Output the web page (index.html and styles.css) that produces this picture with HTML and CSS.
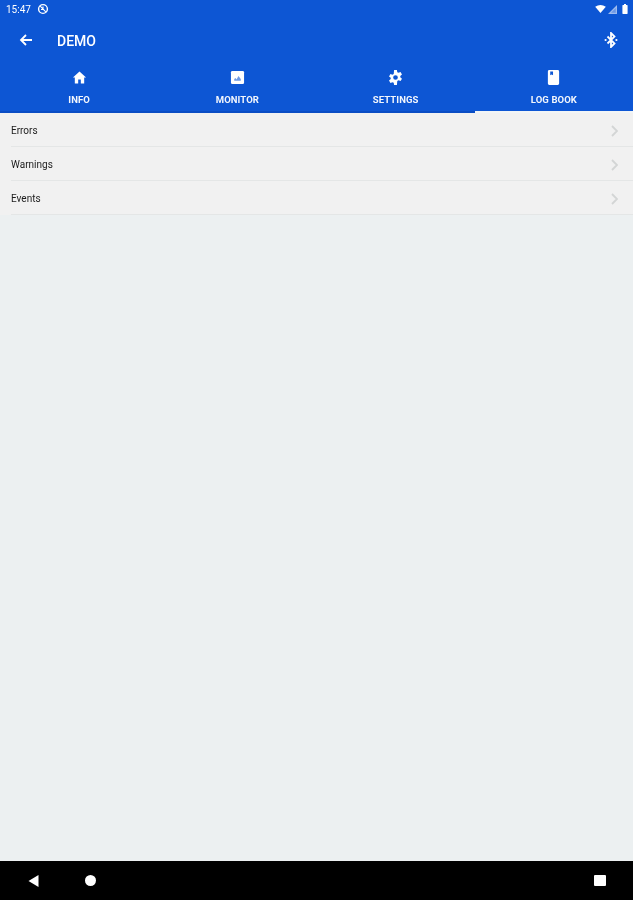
FILE: index.html
```html
<!DOCTYPE html>
<html lang="en">
<head>
<meta charset="utf-8">
<title>DEMO</title>
<link rel="stylesheet" href="styles.css">
</head>
<body>
<div class="app">
  <header class="header">
    <div class="status">
      <div class="status-left">
        <span class="clock">15:47</span>
        <svg class="status-badge" viewBox="0 0 12 12"><circle cx="6" cy="6" r="4.400" fill="none" stroke="#fff" stroke-width="1.400"/><path d="M3.200 3.200l5.600 5.600M4 6.500h3M6 3.500v3" stroke="#fff" stroke-width="1.100" fill="none"/></svg>
      </div>
      <div class="status-right">
        <svg class="wifi" viewBox="0 0 12 9"><path d="M0 2Q6-2 12 2L6 9z" fill="#fff"/></svg>
        <svg class="signal" viewBox="0 0 9 9"><path d="M9 0v9H0z" fill="#fff" fill-opacity=".6"/><path d="M7.800 3v4.800H3z" fill="#0d56d4" fill-opacity=".35"/></svg>
        <svg class="battery" viewBox="0 0 6 10"><path d="M1 1h1V0h2v1h1a.6.6 0 0 1 .6.6v8a.6.6 0 0 1-.6.4H1a.6.6 0 0 1-.6-.4v-8A.6.6 0 0 1 1 1z" fill="#fff"/></svg>
      </div>
    </div>
    <div class="toolbar">
      <svg class="back" viewBox="0 0 14 14"><path d="M13 7H2.500M7 2 2 7l5 5" fill="none" stroke="#fff" stroke-width="1.800"/></svg>
      <span class="title">DEMO</span>
      <svg class="bt" viewBox="0 0 14 16"><path d="M3.500 4.500l7 7L7 15V1l3.500 3.500-7 7" fill="none" stroke="#fff" stroke-width="1.800"/><circle cx="1.600" cy="8" r="1.100" fill="#fff"/><circle cx="12.400" cy="8" r="1.100" fill="#fff"/></svg>
    </div>
    <nav class="tabs">
      <div class="tab">
        <svg class="tab-icon" viewBox="0 0 16 16"><path d="M8 1.500 1 8h2v6.500h3.600V10h2.800v4.500H13V8h2z" fill="#fff"/></svg>
        <span class="tab-label">INFO</span>
      </div>
      <div class="tab">
        <svg class="tab-icon" viewBox="0 0 16 16"><rect x="1" y="1" width="14" height="14" rx="1.500" fill="#fff"/><path d="M4.500 11.500V9.500L6 8.500l1 1.500L9 6.500l2.500 3v2z" fill="#0d56d4" fill-opacity=".6"/></svg>
        <span class="tab-label">MONITOR</span>
      </div>
      <div class="tab">
        <svg class="tab-icon" viewBox="0 0 16 16"><path fill-rule="evenodd" d="M6.500 0h3l.4 2.300 1.300.7 2.200-.8 1.500 2.600-1.800 1.500v1.400l1.800 1.500-1.500 2.600-2.200-.8-1.300.7L9.500 16h-3l-.4-2.300-1.300-.7-2.200.8-1.500-2.600 1.800-1.500V8.300L1.100 6.800l1.500-2.600 2.200.8 1.300-.7zM8 5.500a2.500 2.500 0 1 0 0 5 2.500 2.500 0 0 0 0-5z" fill="#fff"/></svg>
        <span class="tab-label">SETTINGS</span>
      </div>
      <div class="tab tab-active">
        <svg class="tab-icon" viewBox="0 0 16 16"><path fill-rule="evenodd" d="M3.500 0h9A1.500 1.500 0 0 1 14 1.500v13a1.500 1.500 0 0 1-1.500 1.500h-9A1.500 1.500 0 0 1 2 14.500v-13A1.500 1.500 0 0 1 3.500 0zM4.500 1.500v4l1.500-.8 1.500.8v-4z" fill="#fff"/></svg>
        <span class="tab-label">LOG BOOK</span>
      </div>
    </nav>
  </header>
  <main class="content">
    <ul class="list">
      <li class="row"><div class="row-inner"><span class="row-text">Errors</span><svg class="chevron" viewBox="0 0 7 12"><path d="M1 1l5 5-5 5" fill="none" stroke="#d3d5d5" stroke-width="1.800"/></svg></div></li>
      <li class="row"><div class="row-inner"><span class="row-text">Warnings</span><svg class="chevron" viewBox="0 0 7 12"><path d="M1 1l5 5-5 5" fill="none" stroke="#d3d5d5" stroke-width="1.800"/></svg></div></li>
      <li class="row"><div class="row-inner"><span class="row-text">Events</span><svg class="chevron" viewBox="0 0 7 12"><path d="M1 1l5 5-5 5" fill="none" stroke="#d3d5d5" stroke-width="1.800"/></svg></div></li>
    </ul>
  </main>
  <footer class="navbar">
    <svg class="nav-back" viewBox="0 0 10 12"><path d="M10 0v12L0 6z" fill="#fff"/></svg>
    <span class="nav-home"></span>
    <span class="nav-recent"></span>
  </footer>
</div>
</body>
</html>
```
FILE: styles.css
```css
* { box-sizing: border-box; }
html, body { margin: 0; height: 100%; }
body { font-family: Roboto, "Liberation Sans", sans-serif; background: #ecf0f1; }
.app { display: flex; flex-direction: column; height: 900px; width: 633px; overflow: hidden; filter: blur(0.45px); }
.header { background: #0d56d4; color: #fff; height: 113px; flex: none; display: flex; flex-direction: column; }
.status { height: 18px; display: flex; justify-content: space-between; align-items: center; padding: 0 5px 0 6px; }
.status-left { display: flex; align-items: center; gap: 6px; }
.clock { font-size: 10px; }
.status-badge { width: 12px; height: 12px; }
.status-right { display: flex; align-items: center; gap: 2px; }
.wifi { width: 11px; height: 8px; }
.signal { width: 9px; height: 9px; }
.battery { width: 6px; height: 10px; margin-left: 3px; }
.toolbar { height: 44px; display: flex; align-items: center; padding: 1px 15px 0 19px; }
.back { width: 14px; height: 14px; margin-top: -2px; }
.title { font-size: 14px; font-weight: 500; margin-left: 24px; flex: 1; }
.bt { width: 14px; height: 16px; margin-top: -1px; }
.tabs { flex: 1; display: grid; grid-template-columns: repeat(4, 1fr); }
.tab { display: flex; flex-direction: column; align-items: center; padding-top: 8px; gap: 9px; border-bottom: 2px solid #0a4dc4; }
.tab-active { border-bottom-color: #f2f5f6; }
.tab-icon { width: 15px; height: 15px; }
.tab-label { font-size: 9.5px; font-weight: 700; letter-spacing: 0.1px; line-height: 11px; opacity: .95; }
.content { flex: 1; }
.list { list-style: none; margin: 0; padding: 0; }
.row { height: 34px; padding-left: 11px; background: #f1f1f1; }
.row-inner { height: 100%; padding: 2px 15px 0 0; display: flex; align-items: center; justify-content: space-between; border-bottom: 1px solid #e4e6e6; font-size: 10px; color: #1c1c1c; }
.row-text { line-height: 12px; }
.chevron { width: 7px; height: 12px; }
.navbar { height: 39px; background: #000; flex: none; display: flex; align-items: center; padding-left: 28px; }
.nav-back { width: 11px; height: 12px; }
.nav-home { width: 11px; height: 11px; border-radius: 50%; background: #fff; margin-left: 46px; }
.nav-recent { width: 12px; height: 11px; border-radius: 1px; background: #fff; margin-left: auto; margin-right: 27px; }
```
